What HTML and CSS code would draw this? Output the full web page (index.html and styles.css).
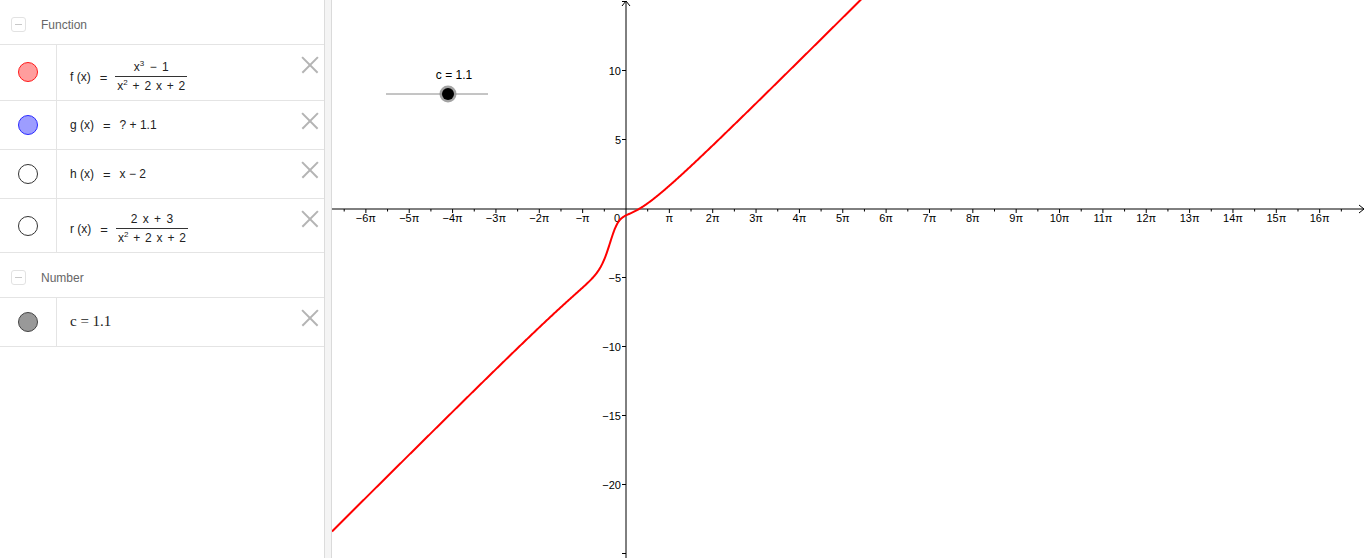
FILE: index.html
```html
<!DOCTYPE html>
<html>
<head>
<meta charset="utf-8">
<link rel="stylesheet" href="styles.css">
</head>
<body>
<div class="app">
  <aside class="panel">
    <div class="group">
      <span class="toggle"><span class="minus"></span></span>
      <span class="group-title">Function</span>
    </div>
    <div class="row row-f">
      <div class="marble-col"><span class="marble marble-red"></span></div>
      <div class="content">
        <div class="math">
          <span class="lhs">f (x)</span><span class="eq">=</span>
          <span class="frac"><span class="num">x<sup>3</sup> − 1</span><span class="den">x<sup>2</sup> + 2 x + 2</span></span>
        </div>
        <span class="close"></span>
      </div>
    </div>
    <div class="row row-g">
      <div class="marble-col"><span class="marble marble-blue"></span></div>
      <div class="content">
        <div class="math"><span class="lhs">g (x)</span><span class="eq">=</span><span>? + 1.1</span></div>
        <span class="close"></span>
      </div>
    </div>
    <div class="row row-h">
      <div class="marble-col"><span class="marble marble-empty"></span></div>
      <div class="content">
        <div class="math"><span class="lhs">h (x)</span><span class="eq">=</span><span>x − 2</span></div>
        <span class="close"></span>
      </div>
    </div>
    <div class="row row-r">
      <div class="marble-col"><span class="marble marble-empty"></span></div>
      <div class="content">
        <div class="math">
          <span class="lhs">r (x)</span><span class="eq">=</span>
          <span class="frac"><span class="num">2 x + 3</span><span class="den">x<sup>2</sup> + 2 x + 2</span></span>
        </div>
        <span class="close"></span>
      </div>
    </div>
    <div class="group">
      <span class="toggle"><span class="minus"></span></span>
      <span class="group-title">Number</span>
    </div>
    <div class="row row-c">
      <div class="marble-col"><span class="marble marble-gray"></span></div>
      <div class="content">
        <div class="math math-num">c = 1.1</div>
        <span class="close"></span>
      </div>
    </div>
  </aside>
  <div class="gutter"></div>
  <main class="graph">
    <svg id="plot" class="plot" viewBox="331 0 1035 558" width="1035" height="558" xmlns="http://www.w3.org/2000/svg">
      <g id="axes" stroke="#000" stroke-width="1" fill="none">
        <line x1="331" y1="209" x2="1363" y2="209"/>
        <polyline points="1358,205 1363,209 1358,213"/>
        <line x1="625" y1="1" x2="625" y2="558"/>
        <polyline points="621,6 625,1 629,6"/>
      </g>
      <g id="ticks" stroke="#000" stroke-width="1"></g>
      <g id="labels" font-family="Liberation Sans, Arial, sans-serif" font-size="11" fill="#000"></g>
      <path id="curve" fill="none" stroke="#ff0000" stroke-width="2" stroke-linejoin="round"/>
      <g class="slider">
        <line x1="385" y1="94" x2="487" y2="94" stroke="#8a8a8a" stroke-width="1"/>
        <circle cx="447" cy="94" r="8.5" fill="#8c8c8c" opacity="0.8"/>
        <circle cx="447" cy="94" r="6" fill="#000"/>
        <text x="453" y="78.5" text-anchor="middle" font-family="Liberation Sans, Arial, sans-serif" font-size="12" fill="#000">c = 1.1</text>
      </g>
    </svg>
  </main>
</div>
<script src="script.js"></script>
</body>
</html>
```

FILE: styles.css
```css
html, body {
  margin: 0;
  padding: 0;
  background: #fff;
}
body {
  font-family: "Liberation Sans", Arial, sans-serif;
  color: #222;
  overflow: hidden;
}
.app {
  display: flex;
  width: 1366px;
  height: 558px;
}
.panel {
  width: 324px;
  flex: none;
  border-right: 1px solid #dcdcdc;
  background: #fff;
}
.gutter {
  width: 6px;
  flex: none;
  background: #f4f4f4;
  border-right: 1px solid #dadada;
}
.graph {
  flex: 1;
  overflow: hidden;
}
.plot {
  display: block;
}
.group {
  height: 39px;
  padding-top: 5px;
  border-bottom: 1px solid #e4e4e4;
  display: flex;
  align-items: center;
}
.toggle {
  width: 13px;
  height: 13px;
  margin-left: 11px;
  border: 1px solid #e2e2e2;
  border-radius: 3px;
  display: flex;
  align-items: center;
  justify-content: center;
}
.minus {
  width: 7px;
  height: 1px;
  background: #c8c8c8;
}
.group-title {
  margin-left: 15px;
  font-size: 12px;
  color: #666;
}
.row {
  display: flex;
  border-bottom: 1px solid #e4e4e4;
}
.row-f { height: 55px; }
.row-g { height: 48px; }
.row-h { height: 48px; }
.row-r { height: 53px; }
.row-c { height: 48px; }
.marble-col {
  width: 56px;
  flex: none;
  border-right: 1px solid #e4e4e4;
  display: flex;
  align-items: center;
  justify-content: center;
}
.row-f .marble-col { padding-bottom: 2px; }
.marble {
  width: 18px;
  height: 18px;
  border-radius: 50%;
  box-sizing: content-box;
}
.marble-red { background: #ff9d9d; border: 1px solid #ff1a1a; }
.marble-blue { background: #9d9dff; border: 1px solid #2a2aff; }
.marble-empty { background: #fff; border: 1.3px solid #333; }
.marble-gray { background: #999; border: 1.3px solid #444; }
.content {
  flex: 1;
  display: flex;
  align-items: center;
  padding-left: 13px;
}
.math {
  flex: 1;
  display: flex;
  align-items: center;
  font-size: 12px;
  color: #222;
}
.row-f .math { padding-top: 9px; }
.row-r .math { padding-top: 7px; }
.eq {
  margin: 0 9px 0 9px;
  font-size: 13px;
}
.frac {
  display: inline-flex;
  flex-direction: column;
  align-items: center;
  word-spacing: 1.5px;
}
.num {
  display: block;
  border-bottom: 1px solid #333;
  padding: 0 1px 2px;
  width: 100%;
  text-align: center;
  line-height: 13px;
  word-spacing: 2px;
}
.den {
  display: block;
  padding: 2px 1px 0;
  line-height: 14px;
}
sup {
  font-size: 8px;
  vertical-align: 5px;
  line-height: 0;
}
.math-num {
  font-family: "Liberation Serif", "Times New Roman", serif;
  font-size: 15px;
  margin-top: -2px;
}
.close {
  align-self: flex-start;
  width: 16px;
  height: 16px;
  margin: 12px 6px 0 0;
  position: relative;
  flex: none;
}
.close::before, .close::after {
  content: "";
  position: absolute;
  left: -3px;
  top: 7px;
  width: 22px;
  height: 1.6px;
  background: #b4b4b4;
  transform: rotate(45deg);
}
.close::after {
  transform: rotate(-45deg);
}
```

FILE: script.js
```js
(function () {
  var NS = 'http://www.w3.org/2000/svg';
  var ox = 625, oy = 208.5, s = 13.8;
  var ticks = document.getElementById('ticks');
  var labels = document.getElementById('labels');

  function line(x1, y1, x2, y2) {
    var l = document.createElementNS(NS, 'line');
    l.setAttribute('x1', x1); l.setAttribute('y1', y1);
    l.setAttribute('x2', x2); l.setAttribute('y2', y2);
    ticks.appendChild(l);
  }
  function text(x, y, str, anchor) {
    var t = document.createElementNS(NS, 'text');
    t.setAttribute('x', x); t.setAttribute('y', y);
    t.setAttribute('text-anchor', anchor);
    t.textContent = str;
    labels.appendChild(t);
  }

  var p = Math.PI * s;
  for (var n = -7; n <= 17; n++) {
    var xm = ox + n * p;
    if (xm > 331 && xm < 1355 && n !== 0) line(xm, 209, xm, 213);
    var xh = ox + (n + 0.5) * p;
    if (xh > 331 && xh < 1355) line(xh, 209, xh, 211.5);
    if (n >= -6 && n <= 16 && n !== 0) {
      var lab;
      if (n === 1) lab = 'π';
      else if (n === -1) lab = '−π';
      else lab = (n < 0 ? '−' : '') + Math.abs(n) + 'π';
      text(xm, 222, lab, 'middle');
    }
  }
  text(619, 222, '0', 'end');

  for (var v = -25; v <= 15; v += 5) {
    if (v === 0) continue;
    var y = oy - v * s;
    line(621, y, 625, y);
    if (v <= 10 && v >= -20) {
      text(620, y + 4, (v < 0 ? '−' : '') + Math.abs(v), 'end');
    }
  }

  var d = '';
  for (var px = 331; px <= 900; px += 0.5) {
    var x = (px - ox) / s;
    var fy = (x * x * x - 1) / (x * x + 2 * x + 2);
    var py = oy - fy * s;
    d += (d ? 'L' : 'M') + px.toFixed(2) + ' ' + py.toFixed(2);
  }
  document.getElementById('curve').setAttribute('d', d);
})();
```
